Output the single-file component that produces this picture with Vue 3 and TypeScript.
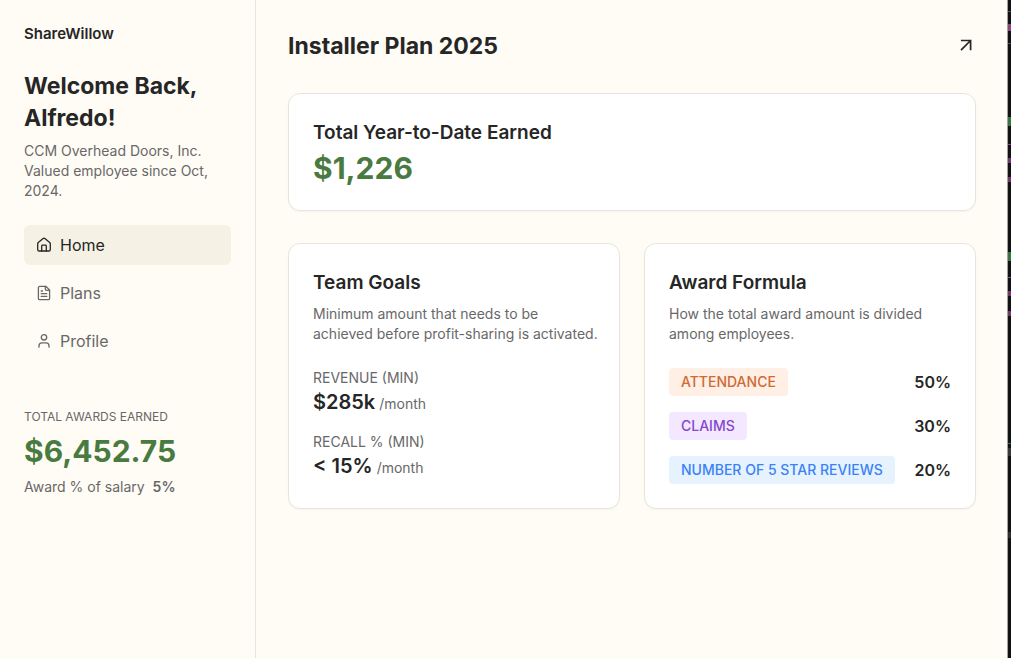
<script setup lang="ts">
interface NavItem {
  label: string
  icon: 'home' | 'file' | 'user'
  active: boolean
}

interface Goal {
  label: string
  value: string
}

interface Award {
  label: string
  share: string
  tone: 'orange' | 'purple' | 'blue'
}

const navItems: NavItem[] = [
  { label: 'Home', icon: 'home', active: true },
  { label: 'Plans', icon: 'file', active: false },
  { label: 'Profile', icon: 'user', active: false },
]

const goals: Goal[] = [
  { label: 'REVENUE (MIN)', value: '$285k' },
  { label: 'RECALL % (MIN)', value: '< 15%' },
]

const awards: Award[] = [
  { label: 'ATTENDANCE', share: '50%', tone: 'orange' },
  { label: 'CLAIMS', share: '30%', tone: 'purple' },
  { label: 'NUMBER OF 5 STAR REVIEWS', share: '20%', tone: 'blue' },
]
</script>

<template>
  <div class="app">
    <aside class="sidebar">
      <div class="brand">ShareWillow</div>
      <h1 class="heading welcome">Welcome Back, Alfredo!</h1>
      <p class="text">CCM Overhead Doors, Inc.<br />Valued employee since Oct, 2024.</p>

      <nav class="nav">
        <a
          v-for="item in navItems"
          :key="item.label"
          href="#"
          class="nav-link"
          :class="{ active: item.active }"
        >
          <svg
            class="icon"
            viewBox="0 0 16 16"
            fill="none"
            stroke="currentColor"
            stroke-width="1.3"
            stroke-linecap="round"
            stroke-linejoin="round"
            aria-hidden="true"
          >
            <template v-if="item.icon === 'home'">
              <path d="M1.7 6.9c0-.6.2-1 .6-1.4l4.8-3.9a1.4 1.4 0 0 1 1.8 0l4.8 3.9c.4.4.6.8.6 1.4v5.5c0 .9-.7 1.6-1.6 1.6H3.3c-.9 0-1.6-.7-1.6-1.6z" />
              <path d="M5.7 14V8.9c0-.5.3-.8.8-.8h3c.5 0 .8.3.8.8V14" />
            </template>
            <template v-else-if="item.icon === 'file'">
              <path d="M9.8 1.3H3.7c-.7 0-1.3.6-1.3 1.3v10.8c0 .7.6 1.3 1.3 1.3h8.6c.7 0 1.3-.6 1.3-1.3V5z" />
              <path d="M9.3 1.5v2.6c0 .7.6 1.3 1.3 1.3h2.8M5.2 6h1.3M5.2 8.7h5.6M5.2 11.4h5.6" />
            </template>
            <template v-else>
              <circle cx="8" cy="4.3" r="2.7" />
              <path d="M3 14.2v-1.4a3 3 0 0 1 3-3h4a3 3 0 0 1 3 3v1.4" />
            </template>
          </svg>
          {{ item.label }}
        </a>
      </nav>

      <section class="totals">
        <div class="caption">TOTAL AWARDS EARNED</div>
        <div class="money">$6,452.75</div>
        <div class="text salary">Award % of salary <strong>5%</strong></div>
      </section>
    </aside>

    <main class="main">
      <header class="header">
        <h2 class="heading">Installer Plan 2025</h2>
        <button class="open" type="button" aria-label="Open plan">
          <svg viewBox="0 0 20 20" fill="none" stroke="currentColor" stroke-width="1.7" aria-hidden="true">
            <path d="M4.9 4.5h9.7v9.7M14.6 4.5 5 14.1" />
          </svg>
        </button>
      </header>

      <section class="card">
        <h3 class="title">Total Year-to-Date Earned</h3>
        <div class="money">$1,226</div>
      </section>

      <div class="columns">
        <section class="card">
          <h3 class="title">Team Goals</h3>
          <p class="text intro">Minimum amount that needs to be achieved before profit-sharing is activated.</p>
          <dl class="goals">
            <div v-for="goal in goals" :key="goal.label">
              <dt class="text">{{ goal.label }}</dt>
              <dd class="goal-value">{{ goal.value }} <span>/month</span></dd>
            </div>
          </dl>
        </section>

        <section class="card">
          <h3 class="title">Award Formula</h3>
          <p class="text intro">How the total award amount is divided among employees.</p>
          <dl class="awards">
            <div v-for="award in awards" :key="award.label" class="award">
              <dt class="tag" :class="award.tone">{{ award.label }}</dt>
              <dd class="share">{{ award.share }}</dd>
            </div>
          </dl>
        </section>
      </div>
    </main>

    <div class="edge" aria-hidden="true"></div>
  </div>
</template>

<style>
body {
  margin: 0;
  background: #fffcf5;
}
</style>

<style scoped>
.app {
  display: grid;
  grid-template-columns: 256px minmax(0, 1fr) 3px;
  min-height: 100vh;
  background: #fffcf5;
  color: #262626;
  font-family: Inter, "Liberation Sans", sans-serif;
  font-size: 14px;
  line-height: 20px;
}

h1, h2, h3, p, dl, dd {
  margin: 0;
}

.sidebar {
  box-sizing: border-box;
  padding: 24px;
  border-right: 1px solid #e7e5df;
}

.brand {
  font-size: 15px;
  font-weight: 600;
}

.heading {
  font-size: 23px;
  font-weight: 700;
  line-height: 32px;
}

.welcome {
  margin: 26px 0 7px;
}

.text {
  color: #686868;
}

.nav {
  display: flex;
  flex-direction: column;
  gap: 8px;
  margin-top: 24px;
}

.nav-link {
  display: flex;
  align-items: center;
  gap: 8px;
  padding: 8px 12px;
  border-radius: 6px;
  color: #686868;
  font-size: 16px;
  line-height: 24px;
  text-decoration: none;
}

.nav-link.active {
  background: #f5f1e4;
  color: #262626;
}

.icon {
  width: 16px;
  height: 16px;
}

.totals {
  margin-top: 48px;
}

.caption {
  margin-bottom: 8px;
  color: #686868;
  font-size: 12px;
  line-height: 16px;
}

.money {
  color: #497a3f;
  font-size: 30px;
  font-weight: 700;
  line-height: 36px;
}

.salary {
  margin-top: 8px;
}

.salary strong {
  margin-left: 4px;
  font-weight: 600;
}

.main {
  padding: 30px 32px;
}

.header {
  display: flex;
  align-items: center;
  justify-content: space-between;
  margin-bottom: 31px;
}

.open {
  display: flex;
  padding: 0;
  border: 0;
  background: none;
  color: #262626;
  cursor: pointer;
}

.open svg {
  width: 20px;
  height: 20px;
}

.card {
  padding: 24px;
  border: 1px solid #e9e5dc;
  border-radius: 12px;
  background: #fff;
  box-shadow: 0 1px 2px rgba(0, 0, 0, 0.04);
}

.title {
  margin-bottom: 2px;
  font-size: 19px;
  font-weight: 600;
  line-height: 30px;
}

.columns {
  display: grid;
  grid-template-columns: repeat(2, minmax(0, 1fr));
  gap: 24px;
  margin-top: 32px;
}

/* The intro may run a little into the card's right padding. */
.intro {
  margin: 6px -4px 24px 0;
}

.goals,
.awards {
  display: flex;
  flex-direction: column;
  gap: 16px;
}

.goal-value {
  display: flex;
  align-items: baseline;
  gap: 4px;
  font-size: 20px;
  font-weight: 600;
  line-height: 28px;
}

.goal-value span {
  color: #686868;
  font-size: 14px;
  font-weight: 400;
  line-height: 20px;
}

.award {
  display: flex;
  align-items: center;
  justify-content: space-between;
}

.tag {
  padding: 4px 12px;
  border-radius: 4px;
  font-weight: 500;
}

.tag.orange {
  background: #ffefe4;
  color: #cf6a35;
}

.tag.purple {
  background: #f3e8ff;
  color: #8348cb;
}

.tag.blue {
  background: #e6f3ff;
  color: #3b82f6;
}

.share {
  font-size: 16px;
  font-weight: 600;
  line-height: 24px;
}

.edge {
  box-shadow: -1px 0 #a3a19d;
  background:
    linear-gradient(#8b4583, #8b4583) 0 24px / 100% 7px no-repeat,
    linear-gradient(#71396b, #71396b) 0 11px / 100% 1px no-repeat,
    linear-gradient(#71396b, #71396b) 0 43px / 100% 1px no-repeat,
    linear-gradient(#397542, #397542) 0 117px / 100% 9px no-repeat,
    linear-gradient(#8b4583, #8b4583) 0 144px / 100% 1px no-repeat,
    linear-gradient(#71396b, #71396b) 0 158px / 100% 5px no-repeat,
    linear-gradient(#71396b, #71396b) 0 177px / 100% 5px no-repeat,
    linear-gradient(#397542, #397542) 0 252px / 100% 9px no-repeat,
    linear-gradient(#8b4583, #8b4583) 0 277px / 100% 1px no-repeat,
    linear-gradient(#71396b, #71396b) 0 291px / 100% 5px no-repeat,
    linear-gradient(#71396b, #71396b) 0 311px / 100% 5px no-repeat,
    linear-gradient(#397542, #397542) 0 443px / 100% 1px no-repeat,
    linear-gradient(#38383b, #38383b) 0 448px / 100% 8px no-repeat,
    linear-gradient(#303034, #303034) 0 532px / 100% 6px no-repeat,
    #111214;
}
</style>
